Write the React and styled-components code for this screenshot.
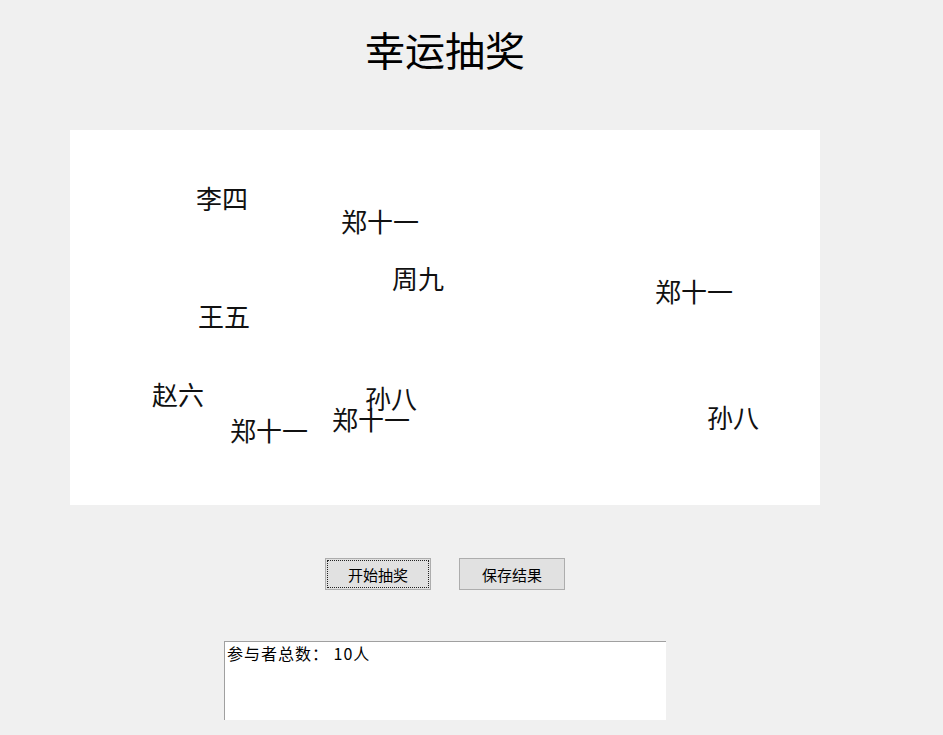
import React from 'react'
import styled, { createGlobalStyle } from 'styled-components';

const names = [
    { name: '李四', x: 126, y: 55 },
    { name: '郑十一', x: 271, y: 78 },
    { name: '周九', x: 322, y: 135 },
    { name: '郑十一', x: 585, y: 148 },
    { name: '王五', x: 128, y: 173 },
    { name: '赵六', x: 82, y: 251 },
    { name: '孙八', x: 295, y: 255 },
    { name: '郑十一', x: 262, y: 276 },
    { name: '郑十一', x: 160, y: 287 },
    { name: '孙八', x: 637, y: 274 },
];

const App = () => {
    return (
        <>
            <GlobalStyle />
            <Page>
                <Title>幸运抽奖</Title>
                <Stage>
                    {
                        names.map((item, index) => (
                            <Name key={index} style={{ left: item.x, top: item.y }}>
                                {item.name}
                            </Name>
                        ))
                    }
                </Stage>
                <Actions>
                    <Button focused>开始抽奖</Button>
                    <Button>保存结果</Button>
                </Actions>
                <Result readOnly value="参与者总数： 10人" />
            </Page>
        </>
    )
}

export default App;

const GlobalStyle = createGlobalStyle`
    html, body {
        margin: 0;
        padding: 0;
        background-color: #f0f0f0;
        overflow: hidden;
    }
    body {
        font-family: "Noto Sans CJK SC", "Liberation Sans", sans-serif;
        color: #000;
    }
`;

const Page = styled.main`
    width: 890px;
    height: 735px;
    display: flex;
    flex-direction: column;
    align-items: center;
`;

const Title = styled.h1`
    margin: 29px 0 0 0;
    height: 40px;
    font-size: 40px;
    line-height: 40px;
    font-weight: 400;
`;

// canvas where the names float around
const Stage = styled.div`
    position: relative;
    margin-top: 61px;
    width: 750px;
    height: 375px;
    background-color: #ffffff;
    overflow: hidden;
`;

const Name = styled.span`
    position: absolute;
    font-size: 26px;
    line-height: 26px;
    white-space: nowrap;
    color: #111;
`;

const Actions = styled.div`
    display: flex;
    gap: 28px;
    margin-top: 53px;
`;

const Button = styled.button`
    width: 106px;
    height: 32px;
    padding: 0;
    background-color: #e1e1e1;
    border: 1px solid #adadad;
    border-radius: 0;
    font-family: "Noto Sans CJK SC", sans-serif;
    font-size: 15px;
    color: #000;
    outline: ${({ focused }) => focused ? '1px dotted #222' : 'none'};
    outline-offset: -3px;
`;

const Result = styled.textarea`
    margin-top: 51px;
    width: 442px;
    height: 79px;
    box-sizing: border-box;
    padding: 1px 2px;
    resize: none;
    background-color: #ffffff;
    border: none;
    border-top: 1px solid #a0a0a0;
    border-left: 1px solid #a0a0a0;
    font-family: "Noto Sans CJK SC", sans-serif;
    font-size: 16px;
    letter-spacing: 1px;
    line-height: 20px;
    color: #000;
    outline: none;
`;
